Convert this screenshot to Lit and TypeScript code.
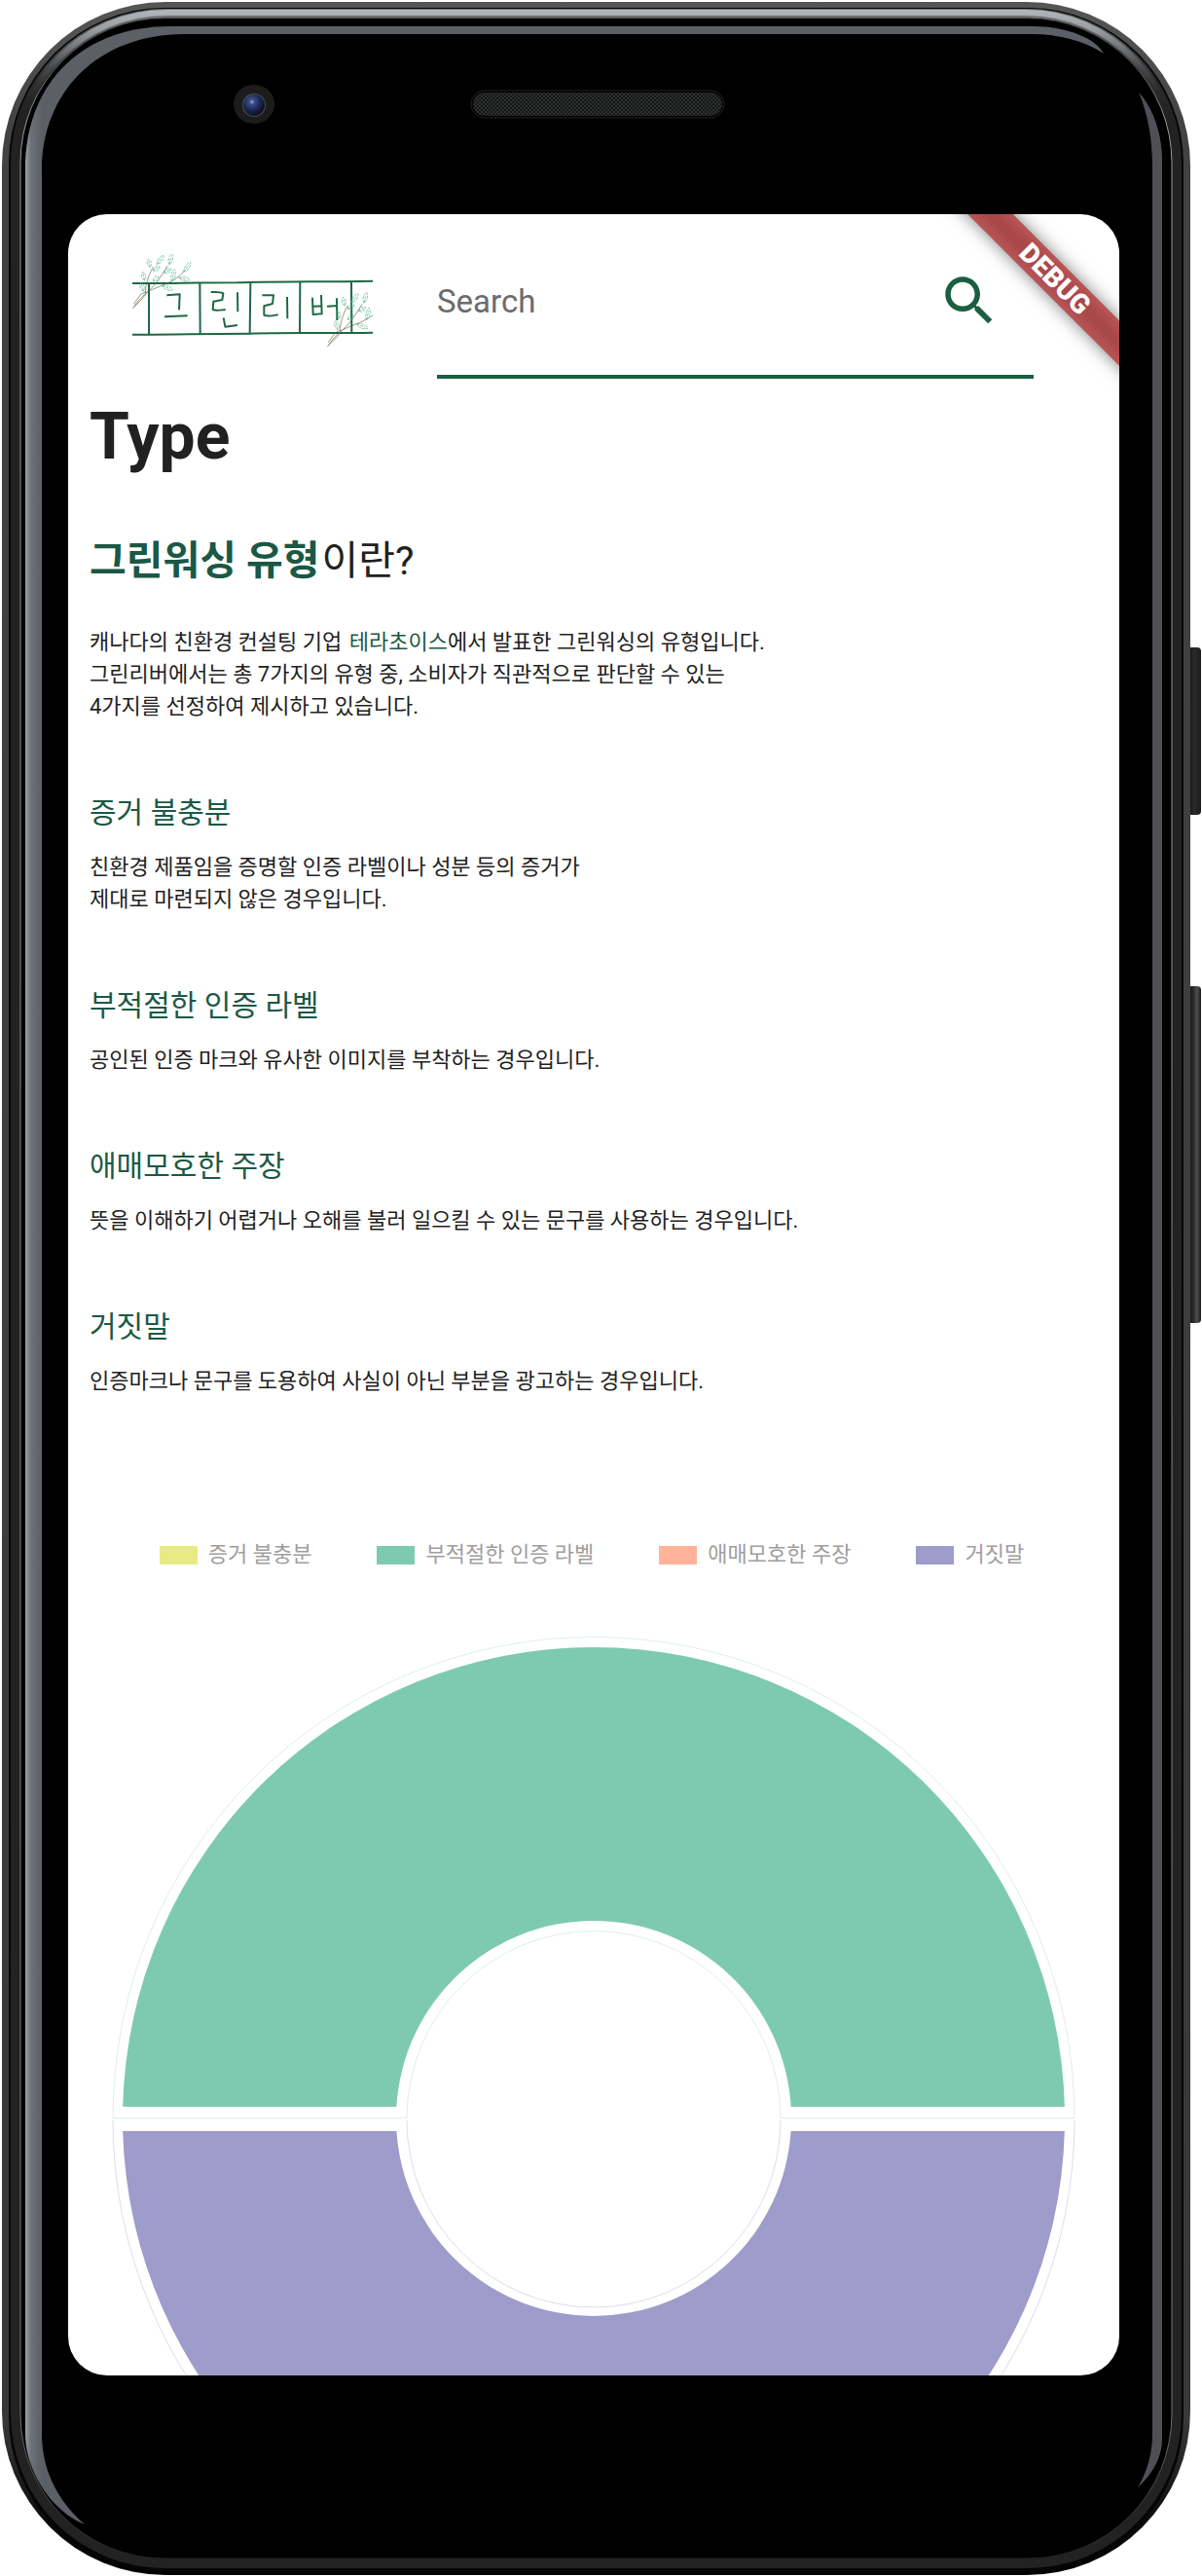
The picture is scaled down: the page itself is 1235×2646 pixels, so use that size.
import { LitElement, html, css, svg } from "lit";
import { customElement } from "lit/decorators.js";

interface TypeInfo {
  name: string;
  color: string;
  lines: string[];
}

const TYPES: TypeInfo[] = [
  {
    name: "증거 불충분",
    color: "#e8ea84",
    lines: ["친환경 제품임을 증명할 인증 라벨이나 성분 등의 증거가", "제대로 마련되지 않은 경우입니다."],
  },
  {
    name: "부적절한 인증 라벨",
    color: "#7ecab0",
    lines: ["공인된 인증 마크와 유사한 이미지를 부착하는 경우입니다."],
  },
  {
    name: "애매모호한 주장",
    color: "#ffb39b",
    lines: ["뜻을 이해하기 어렵거나 오해를 불러 일으킬 수 있는 문구를 사용하는 경우입니다."],
  },
  {
    name: "거짓말",
    color: "#9f9bca",
    lines: ["인증마크나 문구를 도용하여 사실이 아닌 부분을 광고하는 경우입니다."],
  },
];

/* Body of the handset: rim, highlights, camera, speaker and side keys. */
@customElement("phone-bezel")
export class PhoneBezel extends LitElement {
  static styles = css`
    :host {
      display: block;
    }
    .bezel {
      display: block;
      width: 100%;
      height: 100%;
    }
  `;

  render() {
    return html`
      <svg class="bezel" viewBox="0 0 1235 2646" preserveAspectRatio="none" aria-hidden="true">
        <defs>
          <linearGradient id="shell" x1="0" y1="0" x2="0" y2="1">
            <stop offset="0" stop-color="#565656" />
            <stop offset="0.05" stop-color="#434242" />
            <stop offset="0.94" stop-color="#3a3738" />
            <stop offset="0.98" stop-color="#0a0a0a" />
            <stop offset="1" stop-color="#000" />
          </linearGradient>
          <linearGradient id="rim" gradientUnits="userSpaceOnUse" x1="0" y1="8" x2="0" y2="130">
            <stop offset="0" stop-color="#75777a" />
            <stop offset="0.2" stop-color="#5e6063" />
            <stop offset="0.6" stop-color="#2c2d2e" />
            <stop offset="1" stop-color="#222" stop-opacity="0" />
          </linearGradient>
          <linearGradient id="shine" gradientUnits="userSpaceOnUse" x1="0" y1="10" x2="0" y2="110">
            <stop offset="0" stop-color="#b2b5ba" />
            <stop offset="0.2" stop-color="#9a9da2" />
            <stop offset="0.6" stop-color="#46484b" />
            <stop offset="1" stop-color="#222" stop-opacity="0" />
          </linearGradient>
          <linearGradient id="band" gradientUnits="userSpaceOnUse" x1="26" y1="0" x2="43" y2="0">
            <stop offset="0" stop-color="#9a9ea3" />
            <stop offset="0.35" stop-color="#6c7077" />
            <stop offset="1" stop-color="#5c5f66" />
          </linearGradient>
          <linearGradient id="hair" x1="0" y1="0" x2="0" y2="1">
            <stop offset="0" stop-color="#222" />
            <stop offset="0.04" stop-color="#999" />
            <stop offset="0.94" stop-color="#777" />
            <stop offset="1" stop-color="#222" />
          </linearGradient>
          <linearGradient id="key" x1="0" y1="0" x2="1" y2="0">
            <stop offset="0" stop-color="#0c0c0c" />
            <stop offset="0.45" stop-color="#2b2b2b" />
            <stop offset="0.7" stop-color="#505050" />
            <stop offset="1" stop-color="#1b1b1b" />
          </linearGradient>
          <linearGradient id="keydark" x1="0" y1="0" x2="1" y2="0">
            <stop offset="0" stop-color="#0c0c0c" />
            <stop offset="0.5" stop-color="#2b2b2b" />
            <stop offset="1" stop-color="#1d1d1d" />
          </linearGradient>
          <radialGradient id="lens" cx="0.4" cy="0.35" r="0.65">
            <stop offset="0" stop-color="#8fa3d0" />
            <stop offset="0.2" stop-color="#3a4c86" />
            <stop offset="0.6" stop-color="#1b2750" />
            <stop offset="1" stop-color="#0b0f20" />
          </radialGradient>
          <pattern id="mesh" width="4" height="4" patternUnits="userSpaceOnUse">
            <rect width="4" height="4" fill="#151616" />
            <circle cx="1" cy="1" r="0.8" fill="#505252" />
            <circle cx="3" cy="3" r="0.8" fill="#505252" />
          </pattern>
        </defs>

        <rect x="1220" y="665" width="14" height="172" rx="4" fill="url(#keydark)" />
        <rect x="1220" y="1013" width="14" height="346" rx="4" fill="url(#key)" />

        <rect x="2" y="2" width="1221" height="2643" rx="168" fill="url(#shell)" />
        <rect x="9" y="8" width="1207" height="2634" rx="160" fill="#050505" />
        <rect x="11" y="9" width="1203" height="2629" rx="158" fill="#222" />
        <path
          d="M15 172 C15 84 84 14 172 14 H1054 C1141 14 1209 84 1209 172"
          fill="none" stroke="url(#rim)" stroke-width="10"
        />
        <path
          d="M15 172 C15 84 84 13 172 13 H1054 C1141 13 1209 84 1209 172"
          fill="none" stroke="url(#shine)" stroke-width="6"
        />
        <rect x="21" y="19" width="1183" height="2609" rx="148" fill="#000" stroke="url(#hair)" stroke-width="1" />

        <path
          d="M26 2500 V175 C26 80 90 27 175 27 H1060 C1098 27 1126 40 1134 55 C1115 42 1088 35 1060 35 H190 C100 35 43 95 43 175 V2500 C43 2540 62 2572 87 2593 C50 2578 26 2535 26 2500Z"
          fill="url(#band)"
        />
        <path
          d="M1170 95 C1186 112 1194 140 1194 165 V2505 C1194 2528 1180 2545 1169 2555 C1178 2540 1184 2522 1184 2500 V170 C1184 145 1180 118 1170 95Z"
          fill="#4f5057"
        />

        <ellipse cx="261" cy="107" rx="21" ry="20" fill="#1c1c1c" />
        <circle cx="261" cy="108" r="12" fill="#4a4b50" />
        <circle cx="261" cy="108" r="11" fill="url(#lens)" />

        <rect x="484" y="93" width="260" height="28" rx="14" fill="#000" stroke="#222" stroke-width="1" />
        <rect x="486" y="95" width="256" height="24" rx="12" fill="url(#mesh)" />
      </svg>
    `;
  }
}

/* Hand-drawn banner logo with a sprig at each end. */
@customElement("river-logo")
export class RiverLogo extends LitElement {
  static styles = css`
    :host {
      display: block;
    }
    .logo {
      display: block;
      width: 247px;
      height: 100px;
    }
    .ink {
      fill: none;
      stroke: #1d6746;
      stroke-width: 6;
      stroke-linejoin: round;
    }
    .leaf {
      fill: none;
      stroke: #58b596;
      stroke-width: 2;
      stroke-dasharray: 9 3;
    }
    .twig {
      fill: none;
      stroke: #6b5f50;
      stroke-width: 2;
    }
  `;

  private leaf(x: number, y: number, turn: number, size = 17) {
    return svg`<path class="leaf" transform="translate(${x} ${y}) rotate(${turn})"
      d="M0 ${size} C-9 ${size / 3} -8 ${-size / 2} 0 ${-size} C8 ${-size / 2} 9 ${size / 3} 0 ${size}Z M0 ${size} V${-size / 2}" />`;
  }

  private sprig(dx: number, dy: number) {
    return svg`<g transform="translate(${dx} ${dy})">
      <path class="twig" d="M79 230 C95 205 110 190 127 177 C150 155 168 130 186 98 M127 177 C160 160 190 155 222 130 L240 112 M118 182 C118 160 126 130 142 102 M82 216 L104 186 L120 178 M84 224 L108 200 L126 176" />
      ${this.leaf(130, 90, -12, 13)}
      ${this.leaf(164, 80, 35)}
      ${this.leaf(196, 78, 14)}
      ${this.leaf(247, 102, 35, 18)}
      ${this.leaf(113, 130, -10, 13)}
      ${this.leaf(152, 107, 62, 12)}
      ${this.leaf(186, 114, 68, 13)}
      ${this.leaf(204, 128, 12, 19)}
      ${this.leaf(238, 138, 100, 17)}
      ${this.leaf(108, 163, -15, 14)}
      ${this.leaf(150, 138, 45, 11)}
      ${this.leaf(186, 166, 112, 18)}
    </g>`;
  }

  render() {
    return html`
      <svg class="logo" viewBox="78 62 741 300" role="img" aria-label="그린리버">
        <path class="ink" d="M78 152 C200 153 240 150 400 150 C560 146 640 148 819 145" />
        <path class="ink" d="M78 310 C200 311 280 307 440 307 C560 303 680 307 819 304" />
        <path class="ink" d="M129 152 V309 M286 151 L287 307 M442 150 L440 306 M595 148 L594 305 M753 146 L754 305" />
        <path class="ink" d="M184 189 L224 186 L222 234 M177 255 L248 252" />
        <path class="ink" d="M320 179 C340 178 352 178 358 183 L355 203 L328 208 L326 233 C338 238 352 234 365 233 M402 180 L403 240 M359 258 L364 286 L402 281" />
        <path class="ink" d="M478 189 L513 189 L510 215 L484 222 L484 250 C500 256 514 250 527 249 M555 194 L556 261" />
        <path class="ink" d="M633 196 L635 248 L662 246 M660 188 L662 248 M635 223 L660 222 M678 223 L709 221 M708 198 L709 266" />
        ${this.sprig(0, 0)} ${this.sprig(600, 118)}
      </svg>
    `;
  }
}

/* Ring chart: one half per category, each with a faint outline. */
@customElement("share-chart")
export class ShareChart extends LitElement {
  static styles = css`
    :host {
      display: block;
    }
    .ring {
      display: block;
      width: 100%;
    }
    .outline {
      fill: none;
      stroke-width: 1;
    }
    .mint {
      fill: #7ecab0;
    }
    .violet {
      fill: #9f9bca;
    }
    .mint-line {
      stroke: #deefe9;
    }
    .violet-line {
      stroke: #dddcec;
    }
  `;

  render() {
    return html`
      <svg class="ring" viewBox="0 0 990 990" role="img" aria-label="유형별 비율">
        <path class="mint" d="M11.15 483 A484 484 0 0 1 978.85 483 H697.65 A203 203 0 0 0 292.35 483Z" />
        <path class="violet" d="M11.17 508 A484 484 0 0 0 978.83 508 H697.58 A203 203 0 0 1 292.42 508Z" />
        <path class="outline mint-line" d="M1 494.5 A494 494 0 0 1 989 494.5 H687 A192 192 0 0 0 303 494.5Z" />
        <path class="outline violet-line" d="M1 497 A494 494 0 0 0 989 497 M687 497 A192 192 0 0 1 303 497" />
      </svg>
    `;
  }
}

@customElement("app-root")
export class AppRoot extends LitElement {
  static styles = css`
    :host {
      display: block;
      background: #fff;
      font-family: Roboto, "Noto Sans CJK KR", sans-serif;
      color: #212121;
    }
    .phone {
      position: relative;
      display: grid;
      grid-template-columns: 70fr 1080fr 85fr;
      grid-template-rows: 220fr 2220fr 206fr;
      width: 100%;
      aspect-ratio: 1235 / 2646;
    }
    .body {
      position: absolute;
      inset: 0;
    }
    .screen {
      position: relative;
      grid-column: 2;
      grid-row: 2;
      min-width: 0;
      min-height: 0;
      overflow: hidden;
      border-radius: 40px;
      background: #fff;
    }
    .header {
      display: flex;
      align-items: center;
      gap: 66px;
      padding: 12px 88px 0 66px;
    }
    .search {
      flex: 1;
      min-width: 0;
      display: flex;
      align-items: center;
      height: 157px;
      box-sizing: border-box;
      padding-right: 33px;
      border-bottom: 4px solid #1b5e42;
    }
    .field {
      flex: 1;
      min-width: 0;
      padding: 2px 0 0;
      border: 0;
      outline: 0;
      background: none;
      font: 400 33px/48px Roboto, "Noto Sans CJK KR", sans-serif;
      color: #212121;
    }
    .field::placeholder {
      color: #6b6b6b;
      opacity: 1;
    }
    .go {
      display: block;
      width: 66px;
      height: 66px;
      padding: 0;
      border: 0;
      background: none;
      color: #1b5e42;
    }
    .icon {
      display: block;
      width: 66px;
      height: 66px;
      fill: currentColor;
    }
    .content {
      padding: 20px 22px 0;
    }
    .page-title {
      margin: 0 0 56px;
      font-size: 66px;
      line-height: 80px;
      font-weight: 700;
    }
    .question {
      margin: 0 0 36px;
      font-size: 41px;
      line-height: 62px;
      font-weight: 400;
    }
    .strong {
      margin-right: 2px;
      font-weight: 700;
      color: #1b5845;
    }
    .text {
      margin: 0;
      font-size: 22px;
      line-height: 33px;
    }
    .line {
      display: block;
    }
    .source {
      margin-left: 2px;
      color: #1b5845;
      text-decoration: none;
    }
    .section {
      margin-top: 71px;
    }
    .name {
      margin: 0 0 17px;
      font-size: 30px;
      line-height: 44px;
      font-weight: 400;
      color: #1b5845;
    }
    .legend {
      display: flex;
      flex-wrap: wrap;
      justify-content: center;
      gap: 22px 67px;
      margin: 146px 0 0;
      padding: 0 4px 0 0;
      list-style: none;
      font-size: 22px;
      line-height: 32px;
      color: #9e9e9e;
    }
    .entry {
      display: flex;
      align-items: center;
      gap: 11px;
    }
    .swatch {
      width: 39px;
      height: 19px;
    }
    .chart {
      margin: 68px 45px 0;
    }
    .ribbon {
      position: absolute;
      top: 50px;
      right: -109px;
      width: 350px;
      height: 33px;
      transform: rotate(45deg);
      background: linear-gradient(#b95556, #a94848 40%, #a94848 60%, #b95556);
      box-shadow: 0 0 17px rgba(0, 0, 0, 0.5);
      font-size: 28px;
      line-height: 33px;
      font-weight: 900;
      text-align: center;
      color: #fff;
    }
  `;

  render() {
    return html`
      <div class="phone">
        <phone-bezel class="body"></phone-bezel>
        <main class="screen">
          <header class="header">
            <river-logo></river-logo>
            <form class="search" role="search" @submit=${(e: Event) => e.preventDefault()}>
              <input class="field" type="text" placeholder="Search" aria-label="Search" />
              <button class="go" type="submit" aria-label="Search">
                <svg class="icon" viewBox="0 0 24 24" aria-hidden="true">
                  <path
                    d="M15.5 14h-.79l-.28-.27C15.41 12.59 16 11.11 16 9.5 16 5.91 13.09 3 9.5 3S3 5.91 3 9.5 5.91 16 9.5 16c1.61 0 3.09-.59 4.23-1.57l.27.28v.79l5 4.99L20.49 19l-4.99-5zm-6 0C7.01 14 5 11.99 5 9.5S7.01 5 9.5 5 14 7.01 14 9.5 11.99 14 9.5 14z"
                  />
                </svg>
              </button>
            </form>
          </header>

          <div class="content">
            <h1 class="page-title">Type</h1>
            <h2 class="question"><span class="strong">그린워싱 유형</span>이란?</h2>
            <p class="text">
              <span class="line">캐나다의 친환경 컨설팅 기업 <a class="source" href="#">테라초이스</a>에서 발표한 그린워싱의 유형입니다.</span>
              <span class="line">그린리버에서는 총 7가지의 유형 중, 소비자가 직관적으로 판단할 수 있는</span>
              <span class="line">4가지를 선정하여 제시하고 있습니다.</span>
            </p>
            ${TYPES.map(
              (t) => html`
                <section class="section">
                  <h3 class="name">${t.name}</h3>
                  <p class="text">${t.lines.map((l) => html`<span class="line">${l}</span>`)}</p>
                </section>
              `
            )}
          </div>

          <ul class="legend">
            ${TYPES.map(
              (t) => html`
                <li class="entry"><span class="swatch" style="background:${t.color}"></span>${t.name}</li>
              `
            )}
          </ul>
          <share-chart class="chart"></share-chart>

          <div class="ribbon">DEBUG</div>
        </main>
      </div>
    `;
  }
}
